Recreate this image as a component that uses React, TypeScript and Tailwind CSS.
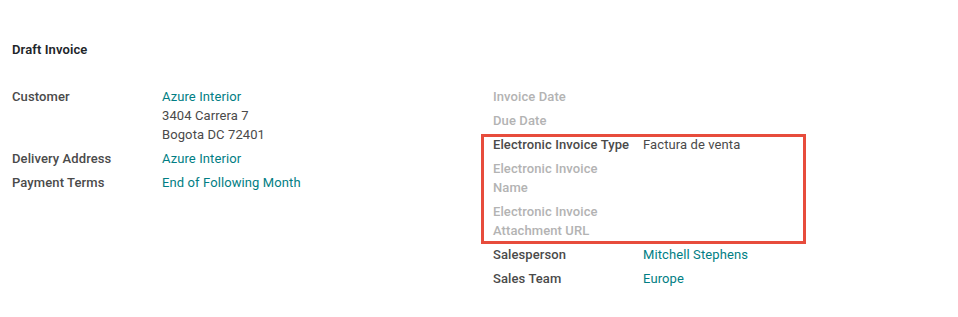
import React from "react";

const teal = "text-[#017e84]";

function Row({ label, muted, children }: { label: React.ReactNode; muted?: boolean; children?: React.ReactNode }) {
  return (
    <div className="flex">
      <div className={`w-[150px] shrink-0 pr-3 font-medium ${muted ? "text-[#b3b3b3]" : "text-[#4a4a4a]"}`}>{label}</div>
      <div className="flex-1">{children}</div>
    </div>
  );
}

export default function App() {
  return (
    <div className="w-[958px] h-[317px] bg-white text-[13px] leading-[19px] tracking-[0.1px] text-[#4a4a4a]" style={{ fontFamily: "Roboto, 'Liberation Sans', sans-serif" }}>
      <div className="pl-3 pt-[40px]">
        <div className="font-semibold text-[#212529]">Draft Invoice</div>
        <div className="grid grid-cols-[481px_1fr] mt-[28px]">
          <div className="flex flex-col gap-[5px]">
            <Row label="Customer">
              <div className={teal}>Azure Interior</div>
              <div>3404 Carrera 7</div>
              <div>Bogota DC 72401</div>
            </Row>
            <Row label="Delivery Address">
              <div className={teal}>Azure Interior</div>
            </Row>
            <Row label="Payment Terms">
              <div className={teal}>End of Following Month</div>
            </Row>
          </div>
          <div className="flex flex-col gap-[5px]">
            <Row label="Invoice Date" muted />
            <Row label="Due Date" muted />
            <div className="relative flex flex-col gap-[5px]">
              <div className="absolute left-[-12px] top-[-1.5px] w-[325px] h-[110px] border-[3px] border-[#e74c3c] pointer-events-none" />
              <Row label="Electronic Invoice Type">
                <div>Factura de venta</div>
              </Row>
              <Row label="Electronic Invoice Name" muted />
              <Row label="Electronic Invoice Attachment URL" muted />
            </div>
            <Row label="Salesperson">
              <div className={teal}>Mitchell Stephens</div>
            </Row>
            <Row label="Sales Team">
              <div className={teal}>Europe</div>
            </Row>
          </div>
        </div>
      </div>
    </div>
  );
}
